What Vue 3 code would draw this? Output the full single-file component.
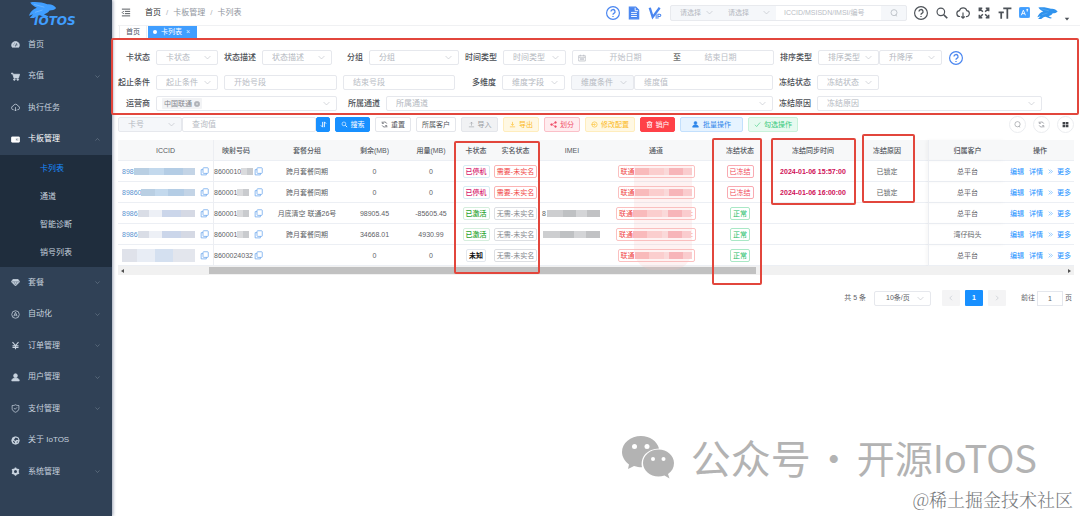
<script setup>
import { h } from 'vue'

const shapes = {
  dash: '<path fill="currentColor" d="M12 4a10 10 0 0 0-9 15h18A10 10 0 0 0 12 4z"/><circle cx="7" cy="13" r="1.8" fill="#304156"/><circle cx="9.5" cy="8.5" r="1.6" fill="#304156"/><circle cx="17" cy="13" r="1.8" fill="#304156"/><path d="M12 17l3-8" stroke="#304156" stroke-width="2.4"/>',
  cart: '<path fill="currentColor" d="M1 3h4l1 3h17l-3 10H8L4.5 5H1z"/><circle cx="9" cy="20" r="2.3" fill="currentColor"/><circle cx="18" cy="20" r="2.3" fill="currentColor"/>',
  cloud: '<path d="M7 18a5 5 0 0 1-1-10 6.5 6.5 0 0 1 12.5 0A5 5 0 0 1 17 18M12 11v10M9 18l3 3 3-3"/>',
  card: '<rect x="1" y="5" width="22" height="14" rx="2" fill="currentColor"/><path d="M13 9h7v6h-7z" fill="#304156"/><path d="M15 12h4"/>',
  gem: '<path fill="currentColor" d="M5 4h14l4 6-11 11L1 10z"/><path d="M2 10h20M8 10l4 9 4-9" stroke="#304156" stroke-width="1"/>',
  auto: '<circle cx="12" cy="12" r="10"/><path d="M7.5 17 12 6l4.5 11M9 13.5h6"/>',
  yen: '<path stroke-width="3" d="M4 3l8 9 8-9M12 12v10M4 12.5h16M4 17h16"/>',
  user: '<circle cx="12" cy="7" r="5" fill="currentColor"/><path fill="currentColor" d="M2 21c0-5 4-8 10-8s10 3 10 8z"/>',
  shield: '<path d="M12 2c3 2 6 2 9 2v8c0 5-4 8-9 10-5-2-9-5-9-10V4c3 0 6 0 9-2zM8 11l3 3 5-5"/>',
  globe: '<circle cx="12" cy="12" r="10" fill="currentColor"/><path fill="#304156" stroke="none" d="M12 4l6 2 2 5-5-1-4 3-3-3zM5 12l5 3 1 5-5-4zM15 15l4-1-3 5z"/>',
  gear: '<circle cx="12" cy="12" r="6.5" stroke-width="5"/><path stroke-width="4" d="M12 1v4M12 19v4M2.5 6.5l3.5 2M18 15.5l3.5 2M2.5 17.5l3.5-2M18 8.5l3.5-2"/>',
  down: '<path d="M2 7l10 10L22 7"/>',
  up: '<path d="M2 17L12 7l10 10"/>',
  left: '<path d="M16 3l-9 9 9 9"/>',
  right: '<path d="M8 3l9 9-9 9"/>',
  fold: '<path stroke-width="2.5" d="M1 3h22M9 9h14M9 15h14M1 21h22M6 8l-4 4 4 4"/>',
  help: '<circle cx="12" cy="12" r="11"/><path stroke-width="2.2" d="M8.5 9.5a3.5 3.5 0 1 1 5 3.2c-1.2.6-1.5 1.2-1.5 2.3M12 17v2"/>',
  doc: '<path fill="currentColor" d="M4 2h11l5 5v15H4z"/><path stroke="#fff" stroke-width="1.6" d="M7 11h10M7 14.5h10M7 18h10M14 3v5h5"/>',
  vip: '<path stroke-width="4" d="M3 3l5 16L20 3"/><path stroke-width="1.8" d="M14 14v8M17 22v-8h3a2 2 0 0 1 0 4h-3"/>',
  search: '<circle cx="10" cy="10" r="6.5"/><path stroke-width="3" d="M15 15l6 6"/>',
  lens: '<circle cx="12" cy="11" r="9"/><path d="M17 17l3 5"/>',
  full: '<path stroke-width="2.6" d="M4 9V4h5M4 4l6 6M15 4h5v5M20 4l-6 6M4 15v5h5M4 20l6-6M20 15v5h-5M20 20l-6-6"/>',
  size: '<path stroke-width="3" d="M9 4h14M16 4v18M1 11h9M5.5 11v11"/>',
  lang: '<rect x="1" y="1" width="22" height="22" rx="2" fill="currentColor"/><path stroke="#fff" stroke-width="2" d="M5 18l4.5-11L14 18M6.5 14.5h6M16 6h4M18 4v6"/>',
  caret: '<path fill="currentColor" stroke="none" d="M3 7h18l-9 11z"/>',
  copy: '<rect x="8" y="2" width="14" height="15" rx="2"/><path d="M8 7H3v14h14v-4"/>',
  calendar: '<path d="M2 5h20v16H2zM2 10h20M7 2v5M17 2v5M6 14h12M6 17h12"/>',
  sort: '<path stroke-width="3" d="M9 3v18l-6-6M15 21V3l6 6"/>',
  refresh: '<path stroke-width="2.4" d="M20 9A8.5 8.5 0 0 0 5 7M4 2v6h6M4 15a8.5 8.5 0 0 0 15 2M20 22v-6h-6"/>',
  upload: '<path d="M12 16V4M7 9l5-5 5 5M3 20h18"/>',
  download: '<path d="M12 3v12M7 10l5 5 5-5M3 20h18"/>',
  share: '<path d="M6 12l13-7M6 12l13 7"/><circle cx="5" cy="12" r="3" fill="currentColor"/><circle cx="19" cy="5" r="3" fill="currentColor"/><circle cx="19" cy="19" r="3" fill="currentColor"/>',
  config: '<circle cx="12" cy="12" r="9"/><path d="M2 12h12M11 8l4 4-4 4"/>',
  bin: '<path stroke-width="2.4" d="M2 5h20M5 5v17h14V5M9 5V2h6v3M9 10h6v7H9z"/>',
  check: '<path d="M3 13l6 6L21 5"/>',
  grid: '<path fill="currentColor" stroke="none" d="M2 3h9v8H2zM13 3h9v8h-9zM2 13h9v8H2zM13 13h9v8h-9z"/>',
  more: '<path d="M3 3l9 9-9 9M12 3l9 9-9 9"/>',
  close: '<circle cx="12" cy="12" r="11" fill="currentColor"/><path stroke="#eee" d="M8 8l8 8M16 8l-8 8"/>'
}

const Icon = (props) =>
  h('svg', { class: 'icon', viewBox: '0 0 24 24', 'aria-hidden': 'true', innerHTML: shapes[props.name] })
Icon.props = ['name']

const Rabbit = () =>
  h('svg', {
    class: 'rabbit',
    viewBox: '0 0 60 34',
    'aria-hidden': 'true',
    innerHTML:
      '<path fill="currentColor" d="M4 1c12-2 26 0 36 4 8-1 15 2 19 8-3 4-9 5-14 5-3 5-8 7-12 8l10 5-5 2-14-5c-5 1-8 3-12 6l-9 0 7-8-9 3c3-8 9-14 17-17C12 10 7 6 4 1z"/><path stroke="#fff" stroke-opacity=".45" fill="none" d="M12 5l22 6M14 22l16-5"/>'
  })

const Drop = (props) =>
  h('span', { class: 'drop' }, [
    h('select', { 'aria-label': props.text, id: props.fid }, [h('option', props.text)]),
    h(Icon, { name: 'down' })
  ])
Drop.props = ['text', 'fid']

const menuTop = [
  { icon: 'dash', text: '首页' },
  { icon: 'cart', text: '充值', arrow: 'down' },
  { icon: 'cloud', text: '执行任务' },
  { icon: 'card', text: '卡板管理', arrow: 'up', open: true }
]
const submenu = ['卡列表', '通道', '智能诊断', '销号列表']
const menuBottom = [
  { icon: 'gem', text: '套餐', arrow: 'down' },
  { icon: 'auto', text: '自动化', arrow: 'down' },
  { icon: 'yen', text: '订单管理', arrow: 'down' },
  { icon: 'user', text: '用户管理', arrow: 'down' },
  { icon: 'shield', text: '支付管理', arrow: 'down' },
  { icon: 'globe', text: '关于 IoTOS' },
  { icon: 'gear', text: '系统管理', arrow: 'down' }
]

const columns = [
  ['ICCID', 96], ['映射号码', 54], ['套餐分组', 78], ['剩余(MB)', 57], ['用量(MB)', 56],
  ['卡状态', 34], ['实名状态', 45], ['IMEI', 68], ['通道', 100], ['冻结状态', 68],
  ['冻结同步时间', 78], ['冻结原因', 76], ['归属客户', 78], ['操作', 68]
]
const rows = [
  { iccid: '898', tone: 'azure', no: '8600010', group: '跨月套餐同期', left: '0', used: '0', state: '已停机', kind: 'stop', real: '需要-未实名', need: true, frozen: true, time: '2024-01-06 15:57:00', reason: '已锁定', owner: '总平台' },
  { iccid: '89860', tone: 'azure', no: '860001', group: '跨月套餐同期', left: '0', used: '0', state: '已停机', kind: 'stop', real: '需要-未实名', need: true, frozen: true, time: '2024-01-06 16:00:00', reason: '已锁定', owner: '总平台' },
  { iccid: '8986', tone: 'lilac', no: '860001', group: '月底清空 联通26号', left: '98905.45', used: '-85605.45', state: '已激活', kind: 'on', real: '无需-未实名', imei: '8', wide: true, owner: '总平台' },
  { iccid: '8986', tone: 'lilac', no: '860001', group: '跨月套餐同期', left: '34668.01', used: '4930.99', state: '已激活', kind: 'on', real: '无需-未实名', imei: ' ', wide: true, owner: '湾仔码头' },
  { iccid: '', tone: 'pale', no: '8600024032', full: true, group: '', left: '0', used: '0', state: '未知', kind: 'none', real: '无需-未实名', owner: '总平台' }
]

const actions = [
  { icon: 'search', text: '搜索', cls: 'primary b35' },
  { icon: 'refresh', text: '重置', cls: 'b36' },
  { text: '所属客户', cls: 'b40' },
  { icon: 'upload', text: '导入', cls: 'grey b37' },
  { icon: 'download', text: '导出', cls: 'yellow b36' },
  { icon: 'share', text: '划分', cls: 'pink b36' },
  { icon: 'config', text: '修改配置', cls: 'yellow b50' },
  { icon: 'bin', text: '销户', cls: 'red b35' },
  { icon: 'user', text: '批量操作', cls: 'sky b63' },
  { icon: 'check', text: '勾选操作', cls: 'green b50' }
]
</script>

<template>
  <div class="page">
    <aside class="side">
      <div class="logo"><Rabbit /><strong>IOTOS</strong></div>
      <nav>
        <ul class="menu">
          <li v-for="m in menuTop" :key="m.text">
            <a href="#" :class="{ open: m.open }"><Icon :name="m.icon" /><span>{{ m.text }}</span><Icon v-if="m.arrow" class="arrow" :name="m.arrow" /></a>
          </li>
        </ul>
        <ul class="submenu">
          <li v-for="(s, i) in submenu" :key="s"><a href="#" :class="{ active: i === 0 }">{{ s }}</a></li>
        </ul>
        <ul class="menu">
          <li v-for="m in menuBottom" :key="m.text">
            <a href="#"><Icon :name="m.icon" /><span>{{ m.text }}</span><Icon v-if="m.arrow" class="arrow" :name="m.arrow" /></a>
          </li>
        </ul>
      </nav>
    </aside>

    <main class="main">
      <header class="top">
        <button class="plain fold" aria-label="折叠"><Icon name="fold" /></button>
        <nav class="crumbs"><a href="#">首页</a><i>/</i><span>卡板管理</span><i>/</i><span>卡列表</span></nav>
        <div class="tools">
          <button class="plain blue" aria-label="帮助"><Icon name="help" /></button>
          <button class="plain blue" aria-label="文档"><Icon name="doc" /></button>
          <button class="plain blue" aria-label="会员"><Icon name="vip" /></button>
          <div class="finder">
            <Drop text="请选择" /><Drop text="请选择" />
            <input aria-label="查询" placeholder="ICCID/MSISDN/IMSI/编号" />
            <button aria-label="查找"><Icon name="lens" /></button>
          </div>
          <button class="plain" aria-label="问题"><Icon name="help" /></button>
          <button class="plain" aria-label="搜索菜单"><Icon name="search" /></button>
          <button class="plain" aria-label="下载"><Icon name="cloud" /></button>
          <button class="plain" aria-label="全屏"><Icon name="full" /></button>
          <button class="plain" aria-label="字号"><Icon name="size" /></button>
          <button class="plain sky-ico" aria-label="语言"><Icon name="lang" /></button>
          <button class="plain avatar" aria-label="账户"><Rabbit /><Icon name="caret" /></button>
        </div>
      </header>

      <nav class="tabs">
        <a href="#">首页</a>
        <a href="#" class="active"><b></b>卡列表<small>×</small></a>
      </nav>

      <form class="filters" @submit.prevent>
        <div class="line">
          <label for="f1">卡状态</label><Drop fid="f1" class="w62" text="卡状态" />
          <label for="f2">状态描述</label><Drop fid="f2" class="w70" text="状态描述" />
          <label for="f3" class="l25">分组</label><Drop fid="f3" class="w90" text="分组" />
          <label for="f4">时间类型</label><Drop fid="f4" class="w63" text="时间类型" />
          <div class="range w202">
            <Icon name="calendar" />
            <input aria-label="开始日期" placeholder="开始日期" /><span>至</span><input aria-label="结束日期" placeholder="结束日期" />
          </div>
          <label for="f5">排序类型</label>
          <div class="pair"><Drop fid="f5" class="w61" text="排序类型" /><Drop class="w63" text="升降序" /></div>
          <button class="plain blue" aria-label="说明"><Icon name="help" /></button>
        </div>
        <div class="line second">
          <label for="g1">起止条件</label><Drop fid="g1" class="w62" text="起止条件" />
          <input class="box w113" aria-label="开始号段" placeholder="开始号段" />
          <input class="box w112" aria-label="结束号段" placeholder="结束号段" />
          <label for="g2" class="l35">多维度</label><Drop fid="g2" class="w63" text="维度字段" />
          <div class="pair w202"><Drop class="w63 tinted" text="维度条件" /><input class="box grow" aria-label="维度值" placeholder="维度值" /></div>
          <label for="g3">冻结状态</label><Drop fid="g3" class="w62" text="冻结状态" />
        </div>
        <div class="line">
          <label for="h1">运营商</label>
          <div class="box multi w181"><span class="chip">中国联通<Icon name="close" /></span><input id="h1" /><Icon name="down" /></div>
          <label for="h2" class="l37">所属通道</label><Drop fid="h2" class="w387" text="所属通道" />
          <label for="h3">冻结原因</label><Drop fid="h3" class="w225" text="冻结原因" />
        </div>
      </form>

      <div class="bar">
        <div class="pair"><Drop class="w64 tinted" text="卡号" /><input class="box w134" aria-label="查询值" placeholder="查询值" /><button class="btn primary sorter" aria-label="排序"><Icon name="sort" /></button></div>
        <button v-for="a in actions" :key="a.text" class="btn" :class="a.cls"><Icon v-if="a.icon" :name="a.icon" />{{ a.text }}</button>
        <div class="rounds">
          <button aria-label="显示搜索"><Icon name="lens" /></button>
          <button aria-label="刷新"><Icon name="refresh" /></button>
          <button class="dark" aria-label="列设置"><Icon name="grid" /></button>
        </div>
      </div>

      <div class="sheet">
        <table>
          <colgroup><col v-for="c in columns" :key="c[0]" :style="{ width: c[1] + 'px' }" /></colgroup>
          <thead><tr><th v-for="c in columns" :key="c[0]" scope="col">{{ c[0] }}</th></tr></thead>
          <tbody>
            <tr v-for="(r, i) in rows" :key="i">
              <td><div class="idcell"><a href="#">{{ r.iccid }}</a><span class="mosaic" :class="r.tone"></span><Icon name="copy" /></div></td>
              <td><div class="idcell num"><span>{{ r.no }}</span><span class="mosaic grey-m" v-if="!r.full"></span><Icon name="copy" /></div></td>
              <td>{{ r.group }}</td>
              <td>{{ r.left }}</td>
              <td>{{ r.used }}</td>
              <td><span class="tag state" :class="r.kind">{{ r.state }}</span></td>
              <td><span class="tag" :class="r.need ? 'need' : 'free'">{{ r.real }}</span></td>
              <td><div v-if="r.imei" class="imei"><span>{{ r.imei }}</span><span class="mosaic ash"></span></div></td>
              <td><span class="tag chan" :class="{ wide: r.wide }">联通<span class="mosaic rose"></span><template v-if="r.wide">:</template></span></td>
              <td><span class="tag" :class="r.frozen ? 'frozen' : 'normal'">{{ r.frozen ? '已冻结' : '正常' }}</span></td>
              <td class="time">{{ r.time }}</td>
              <td>{{ r.reason }}</td>
              <td>{{ r.owner }}</td>
              <td><div class="ops"><a href="#">编辑</a><a href="#">详情</a><a href="#"><Icon name="more" />更多</a></div></td>
            </tr>
          </tbody>
        </table>
        <div class="scroll"><i class="tri"></i><span class="track"><span class="thumb"></span></span><i class="tri end"></i></div>
        <div class="smudge"></div>
      </div>

      <div class="pager">
        <span class="total">共 5 条</span>
        <Drop class="w57" text="10条/页" />
        <div class="nums">
          <button aria-label="上一页"><Icon name="left" /></button>
          <button class="on">1</button>
          <button aria-label="下一页"><Icon name="right" /></button>
        </div>
        <label for="goto">前往</label><input id="goto" value="1" /><span>页</span>
      </div>
    </main>

    <div class="mark m-filter"></div>
    <div class="mark m-state"></div>
    <div class="mark m-frozen"></div>
    <div class="mark m-time"></div>
    <div class="mark m-reason"></div>

    <div class="account">
      <svg viewBox="0 0 52 44" aria-hidden="true">
        <path fill="#b3b3b3" d="M19 1C8.5 1 0 8 0 17c0 5 3 9.5 7 12.5L6 34l6-3c3 1 5 1.3 8 1.3C18 21 26 14 37 13.5 35 6 28 1 19 1z" />
        <path fill="#b3b3b3" d="M52 28c0-7.5-7-13.5-15.5-13.5S21 20.5 21 28s7 13.5 15.5 13.5c2 0 4-.3 6-1l5 3-1.5-4.5c4-2.5 6-6.5 6-11z" />
        <g fill="#fff"><circle cx="12.5" cy="11.5" r="2.5" /><circle cx="25" cy="11.5" r="2.5" /><circle cx="31" cy="24" r="2" /><circle cx="41.5" cy="24" r="2" /></g>
      </svg>
      <span class="lead">公众号</span><span class="dot">·</span><span>开源IoTOS</span>
    </div>
    <div class="credit">@稀土掘金技术社区</div>
  </div>
</template>

<style>
body { margin: 0; background: #fff; }
</style>

<style scoped>
.page {
  position: relative; display: flex; min-height: 100vh; overflow: hidden;
  font: 8px/10px "Liberation Sans", "Noto Sans CJK SC", sans-serif; color: #606266; background: #fff;
}
.page, .page :deep(*) { box-sizing: border-box; }
.page :deep(.icon) { width: 8px; height: 8px; flex: none; display: block; fill: none; stroke: currentColor; stroke-width: 2; }
:where(.page) :deep(:where(input, select, button)) { font: inherit; color: inherit; margin: 0; padding: 0; border: 0; background: none; outline: 0; min-width: 0; }
.page :deep(input::placeholder) { color: #b9bdc5; opacity: 1; }
ul { list-style: none; margin: 0; padding: 0; }
a { color: inherit; text-decoration: none; }

.side { width: 112px; flex: none; background: #304156; color: #c8d3df; box-shadow: 1px 0 3px rgba(30, 50, 90, .45); z-index: 1; }
.logo { height: 29px; padding: 2px 0 0 28px; color: #409eff; line-height: 11px; }
.logo .rabbit { display: block; width: 29px; height: 16px; }
.logo strong { display: block; margin: -2px 0 0 6px; font: italic bold 12px/11px "DejaVu Sans", sans-serif; }
.menu a { display: flex; align-items: center; height: 31px; padding: 0 11px; }
.menu li:nth-child(even) a { height: 32px; }
.page .menu a .icon { width: 9px; height: 9px; }
.menu a span { margin-left: 8px; flex: 1; }
.page .menu a .arrow { width: 5px; height: 5px; margin-right: 1px; color: #8d9bab; }
.menu a.open { color: #fff; }
.submenu { background: #1f2d3d; }
.submenu a { display: block; padding-left: 40px; line-height: 28px; }
.submenu a.active { color: #1a8cff; }

.main { flex: 1; min-width: 0; padding: 0 6px; }
.top { display: flex; align-items: center; height: 26px; padding: 0 4px 0 3px; margin: 0 -6px 0 0; border-bottom: 1px solid #f0f1f3; }
.plain { display: flex; align-items: center; color: #4d5258; }
.page .plain .icon { width: 14px; height: 14px; }
.plain.blue { color: #4a86f0; }
.plain.sky-ico { color: #409eff; }
.page .plain.sky-ico .icon { width: 11px; height: 11px; }
.page .plain.fold .icon { width: 10px; height: 9px; }
.crumbs { display: flex; margin-left: 14px; gap: 4px; color: #90959e; }
.crumbs a { color: #303133; }
.crumbs i { font-style: normal; color: #b0b4bb; padding: 0 1px; }
.tools { display: flex; align-items: center; gap: 7px; margin-left: auto; padding-right: 6px; }
.drop { position: relative; display: block; height: 15px; flex: none; border: 1px solid #e6e8ed; border-radius: 2px; background: #fff; color: #b4b8c0; }
.drop :deep(select) { appearance: none; width: 100%; height: 100%; padding-left: 9px; display: block; }
.page .drop :deep(.icon) { position: absolute; right: 6px; top: 3px; width: 7px; height: 7px; color: #b8bcc4; pointer-events: none; }
.finder { display: flex; height: 16px; width: 237px; margin-left: 1px; border: 1px solid #e8eaee; border-radius: 2px; background: #f5f7fa; font-size: 7px; }
.finder .drop { width: 48px; border: 0; height: 14px; background: none; }
.finder .drop + .drop { width: 57px; }
.finder input { flex: 1; background: #fff; padding-left: 8px; }
.finder button { width: 25px; display: flex; align-items: center; justify-content: center; color: #a8adb5; }
.avatar { gap: 6px; }
.avatar .rabbit { width: 21px; height: 14px; color: #2f93ee; }
.page .avatar .icon { width: 6px; height: 6px; margin-top: 12px; }

.tabs { display: flex; gap: 1px; height: 12px; padding-left: 1px; font-size: 7px; }
.tabs a { display: flex; align-items: center; height: 12px; padding: 0 6px; border: 1px solid #eceef1; border-width: 0 1px; color: #495060; }
.tabs a.active { background: #409eff; border-color: #409eff; color: #fff; padding: 0 6px 0 4px; gap: 4px; }
.tabs b { width: 4px; height: 4px; border-radius: 50%; background: #fff; }
.tabs small { font-size: 7px; opacity: .8; }

.tinted { background: #f5f7fa; }
.box { height: 15px; flex: none; border: 1px solid #e6e8ed; border-radius: 2px; background: #fff; padding: 0 9px; }
.grow { flex: 1; }
.pair { display: flex; }
.filters { display: grid; gap: 6px; padding-top: 12px; }
.line { display: flex; align-items: center; gap: 6px; height: 15px; }
.second { margin-top: 4px; }
.line label { width: 32px; flex: none; text-align: right; white-space: nowrap; font-weight: 500; color: #4a4d53; padding-top: 1px; }
.line .plain { margin-left: 1px; }
.line label.l25 { width: 25px; }
.line label.l35 { width: 35px; }
.line label.l37 { width: 37px; }
.w57 { width: 57px; } .w61 { width: 61px; } .w62 { width: 62px; } .w63 { width: 63px; } .w64 { width: 64px; }
.w70 { width: 70px; } .w90 { width: 90px; } .w112 { width: 112px; } .w113 { width: 113px; } .w134 { width: 134px; }
.w181 { width: 181px; } .w202 { width: 202px; } .w225 { width: 225px; } .w387 { width: 387px; }
.range { display: flex; align-items: center; height: 15px; flex: none; border: 1px solid #e6e8ed; border-radius: 2px; padding: 0 5px; color: #b4b8c0; }
.range input { flex: 1; text-align: center; padding-right: 8px; }
.range span { color: #303133; }
.multi { display: flex; align-items: center; padding: 0 6px 0 5px; }
.multi input { flex: 1; }
.page .multi > .icon { width: 7px; height: 7px; color: #b8bcc4; }
.chip { display: flex; align-items: center; gap: 2px; height: 11px; padding: 0 2px; background: #f2f3f5; color: #85888e; border-radius: 1px; font-size: 7px; }
.page .chip .icon { width: 6px; height: 6px; color: #b0b3b8; }

.bar { display: flex; align-items: center; gap: 5px; margin-top: 6px; height: 15px; }
.bar .pair { flex: none; }
.btn { display: flex; align-items: center; justify-content: center; gap: 3px; height: 15px; flex: none; border: 1px solid #e4e6eb; border-radius: 2px; font-size: 7px; color: #55585e; white-space: nowrap; }
.page .btn .icon { width: 7px; height: 7px; }
.btn.primary { background: #1890ff; border-color: #1890ff; color: #fff; }
.btn.grey { background: #f1f2f4; color: #9a9da3; }
.btn.yellow { background: #fff8e3; border-color: #ffedbd; color: #fbb81c; }
.btn.pink { background: #ffecef; border-color: #fbc0c8; color: #f0506a; }
.btn.red { background: #ff4148; border-color: #ff4148; color: #fff; }
.btn.sky { background: #e6f3ff; border-color: #c3e0fd; color: #2f86ea; gap: 4px; }
.btn.green { background: #e7faf0; border-color: #c8f2da; color: #35c97a; }
.sorter { width: 14px; }
.b35 { width: 35px; } .b36 { width: 36px; } .b37 { width: 37px; } .b40 { width: 40px; } .b50 { width: 50px; } .b63 { width: 63px; }
.rounds { display: flex; gap: 7px; margin-left: auto; }
.rounds button { width: 17px; height: 17px; border: 1px solid #ebedf0; border-radius: 50%; display: flex; align-items: center; justify-content: center; color: #8a8d93; }
.page .rounds .icon { width: 7px; height: 7px; }
.rounds .dark { color: #404348; }

.sheet { position: relative; margin-top: 8px; }
table { width: 100%; table-layout: fixed; border-collapse: separate; border-spacing: 0; font-size: 7px; line-height: 9px; }
th, td { height: 21px; padding: 0; text-align: center; white-space: nowrap; border-bottom: 1px solid #eceff4; }
th { background: #f7f8f9; color: #55585f; font-weight: 500; }
th:nth-child(2) { padding-right: 10px; }
th:nth-child(12), td:nth-child(12) { padding-right: 6px; }
th:nth-child(13), td:nth-child(13) { border-left: 1px solid #eceef2; box-shadow: -2px 0 3px rgba(0, 0, 0, .03); }
th:nth-child(1), td:nth-child(1) { border-right: 1px solid #eceef2; }
.idcell { display: flex; align-items: center; padding: 0 4px; color: #606266; }
.idcell a { color: #5b93d0; }
.page .idcell .icon { width: 9px; height: 9px; margin-left: 5px; color: #6aa5ec; }
.idcell .mosaic { flex: 1; }
.idcell.num { padding: 0 5px 0 0; }
.page .idcell.num .icon { margin-left: auto; }
.idcell.num .mosaic { flex: none; width: 12px; }
.mosaic { display: inline-block; height: 7px; }
.azure { background: linear-gradient(90deg, #b9cfe3 0 25%, #c3d9ed 25% 50%, #b4cde5 50% 80%, #c3d4e6 80%); }
.lilac { background: linear-gradient(90deg, #d9dde6 0 20%, #edf0f6 20% 42%, #cbd6ea 42% 75%, #d5d9e4 75%); }
.idcell .pale { height: 13px; background: linear-gradient(90deg, #dfe2ea 0 20%, #e8edf5 20% 45%, #d4e0f0 45% 70%, #e3e6ed 70%); }
.grey-m { background: linear-gradient(90deg, #dadbdd 0 50%, #c9cbce 50%); }
.tag { display: inline-flex; align-items: center; height: 13px; padding: 0 2px; border: 1px solid #e3e8ee; border-radius: 2px; vertical-align: middle; }
.state { font-weight: 500; }
.stop { color: #d6156c; border-color: #d9ecf3; }
.on { color: #1fa32c; border-color: #d5eedd; }
.none { color: #111; font-weight: 700; }
.need { color: #f14747; border-color: #fbb4b4; }
.free { color: #85888e; border-color: #dddfe3; }
.chan { width: 77px; color: #f04848; border-color: #fbc0c0; }
.chan.wide { width: 80px; }
.rose { flex: 1; background: linear-gradient(90deg, #f9b9bb 0 25%, #fcd3d3 25% 50%, #fbe0e0 50% 60%, #f7b3b8 60% 85%, #fad0d2 85%); }
.frozen { color: #f04858; border-color: #f9aab2; padding: 0 2px; }
.normal { color: #23bd69; border-color: #a9e8c6; padding: 0 2px; }
.imei { display: flex; align-items: center; padding: 0 6px 0 4px; gap: 1px; }
.ash { flex: 1; background: linear-gradient(90deg, #cdced0 0 30%, #bfc1c3 30% 55%, #d4d5d7 55% 75%, #c1c2c4 75%); }
.time { color: #cf1058; font-weight: 700; }
.ops { display: flex; justify-content: flex-end; gap: 5px; padding-right: 3px; color: #1890ff; }
.ops a { display: flex; align-items: center; gap: 4px; }
.page .ops .icon { width: 5px; height: 5px; }
.scroll { display: flex; align-items: center; height: 9px; background: #f1f1f1; padding: 0 3px; }
.track { flex: 1; height: 7px; }
.thumb { display: block; height: 7px; width: 58%; margin-left: 9%; background: #c1c1c1; }
.tri { border: 2px solid transparent; border-right: 3px solid #505050; border-left: 0; }
.tri.end { border-left: 3px solid #505050; border-right: 0; }
.smudge { position: absolute; left: 54%; width: 6%; top: 25px; bottom: 5px; border-radius: 0 0 20px 20px; background: rgba(250, 190, 190, .2); pointer-events: none; }

.pager { display: flex; align-items: center; justify-content: flex-end; margin-top: 15px; padding-right: 2px; font-size: 7px; }
.pager .total { margin-right: 8px; }
.pager .drop { color: #606266; }
.pager .drop :deep(select) { padding-left: 11px; }
.nums { display: flex; gap: 5px; margin: 0 15px 0 11px; }
.nums button { width: 18px; height: 16px; display: flex; align-items: center; justify-content: center; background: #f4f4f5; border-radius: 1px; color: #b5b9c1; }
.page .nums .icon { width: 6px; height: 6px; }
.nums .on { background: #1890ff; color: #fff; font-weight: 700; }
.pager input { width: 26px; height: 15px; border: 1px solid #e4e7ed; text-align: center; margin: 0 2px; }

.mark { position: absolute; border: 2px solid #e2463c; border-radius: 2px; pointer-events: none; z-index: 3; }
.m-filter { left: 111px; right: 1px; top: 38px; height: 77px; }
.m-state { left: 454px; width: 86px; top: 141px; height: 133px; }
.m-frozen { left: 712px; width: 50px; top: 138px; height: 147px; }
.m-time { left: 771px; width: 85px; top: 138px; height: 67px; }
.m-reason { left: 862px; width: 53px; top: 134px; height: 69px; }

.account { position: absolute; right: 43px; bottom: 35px; display: flex; align-items: center; font: 38px/48px "Noto Sans CJK SC", sans-serif; color: #b3b3b3; white-space: nowrap; }
.account svg { width: 52px; height: 44px; margin-right: 17px; }
.account .lead { font-size: 40px; }
.account .dot { width: 46px; text-align: center; }
.credit { position: absolute; right: 7px; bottom: 5px; font: 300 18px/24px "Noto Serif CJK SC", "Noto Sans CJK SC", serif; color: #77797c; white-space: nowrap; }
</style>
